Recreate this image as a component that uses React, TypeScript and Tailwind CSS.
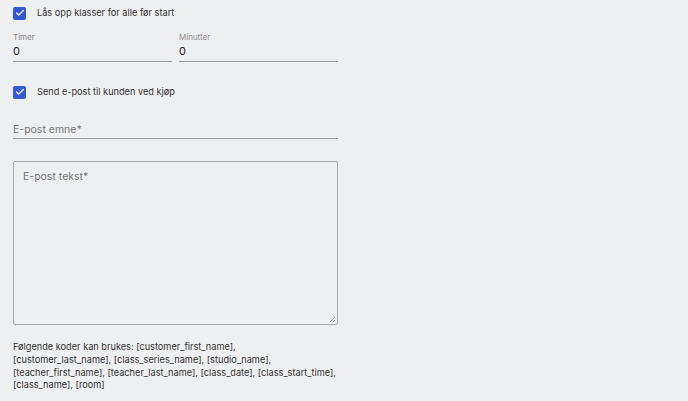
import { Check } from 'lucide-react'

function CheckRow({ label }: { label: string }) {
  return (
    <label className="flex items-center gap-[11px] h-[26px]">
      <span className="w-[13px] h-[13px] rounded-[2px] bg-[#3457d5] flex items-center justify-center">
        <Check className="w-[10px] h-[10px] text-white" strokeWidth={3} />
      </span>
      <span className="text-[9.2px] text-[#333]">{label}</span>
    </label>
  )
}

function UnderlineField({ label, value }: { label: string; value: string }) {
  return (
    <div className="flex-1 flex flex-col border-b border-[#9a9a9a]">
      <span className="text-[8px] leading-[10px] text-[#8a8a8a]">{label}</span>
      <span className="text-[11px] leading-[19px] text-[#222]">{value}</span>
    </div>
  )
}

export default function App() {
  return (
    <div
      className="w-[688px] h-[401px] bg-[#eeeff1] px-[13px]"
      style={{ fontFamily: 'Inter, "Noto Sans", sans-serif' }}
    >
      <div className="w-[325px] flex flex-col">
        <CheckRow label="Lås opp klasser for alle før start" />

        <div className="flex gap-[7px] mt-[6px]">
          <UnderlineField label="Timer" value="0" />
          <UnderlineField label="Minutter" value="0" />
        </div>

        <div className="mt-[17px]">
          <CheckRow label="Send e-post til kunden ved kjøp" />
        </div>

        <div className="mt-[18px] border-b border-[#9a9a9a] pb-[1px]">
          <span className="block text-[10.5px] leading-[14px] text-[#777]">E-post emne*</span>
        </div>

        <div className="mt-[22px] h-[164px] border border-[#aaaaaa] rounded-[2px] relative px-[9px] pt-[8px]">
          <span className="block text-[10.5px] leading-[14px] text-[#777]">E-post tekst*</span>
          <svg className="absolute right-[1px] bottom-[1px]" width="7" height="7" viewBox="0 0 7 7">
            <path d="M6 1 L1 6 M6 4 L4 6" stroke="#999" strokeWidth="1" />
          </svg>
        </div>

        <p className="mt-[16px] whitespace-nowrap text-[9.2px] leading-[12.8px] text-[#333]">
          Følgende koder kan brukes: [customer_first_name],
          <br />
          [customer_last_name], [class_series_name], [studio_name],
          <br />
          [teacher_first_name], [teacher_last_name], [class_date], [class_start_time],
          <br />
          [class_name], [room]
        </p>
      </div>
    </div>
  )
}
